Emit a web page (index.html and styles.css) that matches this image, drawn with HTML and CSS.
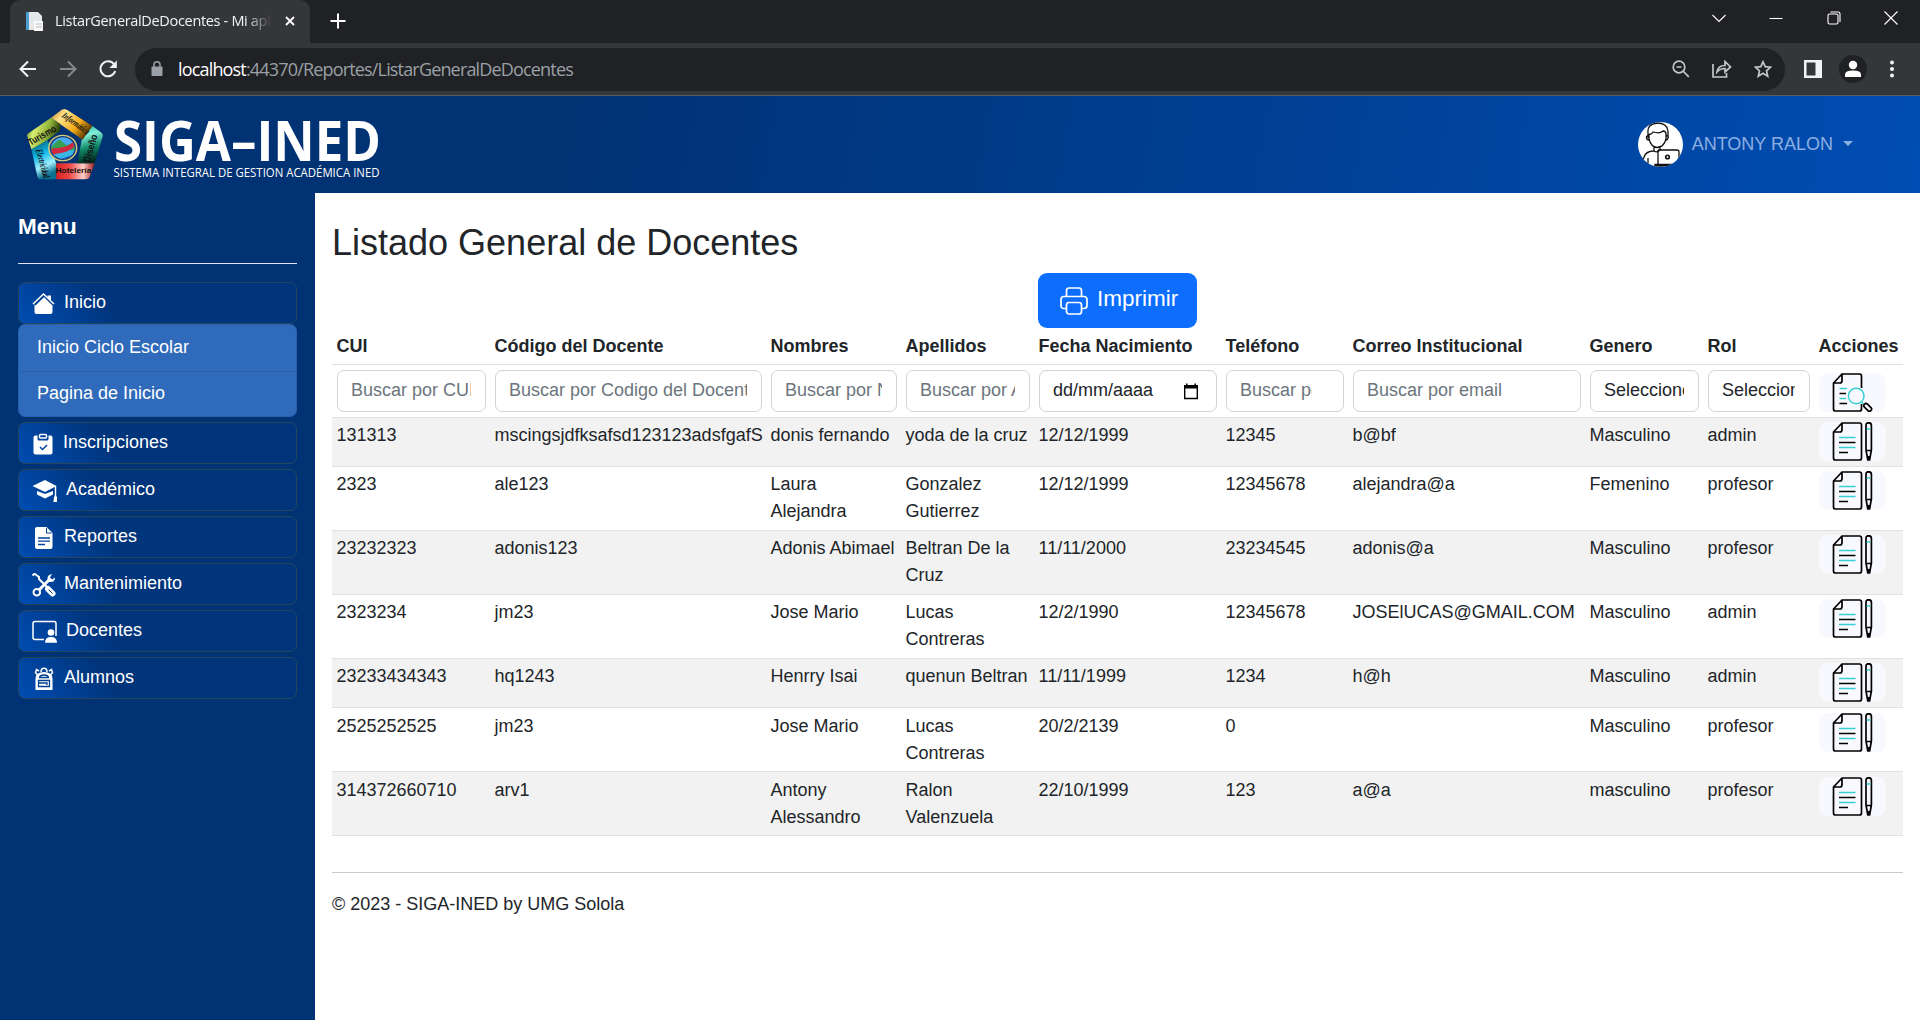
FILE: index.html
```html
<!DOCTYPE html>
<html lang="es">
<head>
<meta charset="utf-8">
<title>ListarGeneralDeDocentes - Mi aplicación</title>
<link rel="stylesheet" href="styles.css">
</head>
<body>
<svg class="defs" width="0" height="0">
  <symbol id="edit-doc" viewBox="0 0 67 39">
    <path d="M23 1H40.500Q42.500 1 42.500 3V36Q42.500 38 40.500 38H16.500Q14.500 38 14.500 36V10zV7.500Q23 10 21 10H14.500" fill="none" stroke="#000" stroke-width="1.700" stroke-linejoin="round"/>
    <path d="M20 15.500H36.500M20 25.500H36.500" stroke="#35cfcd" stroke-width="1.400"/>
    <path d="M20 20.500H36.500M20 30.500H29" stroke="#000" stroke-width="1.400"/>
    <path d="M47 28V3.500Q47 .8 49.700 .8T52.400 3.500V28L50.600 38H48.800zM47 28.500H52.400M49.700 34V38" fill="none" stroke="#000" stroke-width="1.700" stroke-linejoin="round"/>
    <path d="M47.700 7H51.700" stroke="#35cfcd" stroke-width="1.500"/>
  </symbol>
</svg>

<div class="tabstrip">
  <div class="tab">
    <svg class="favicon" width="18" height="21" viewBox="0 0 18 21"><path d="M1 1H12V19H1z" fill="#f4f6f8"/><path d="M1 1H5V19H1z" fill="#4a9fd0"/><path d="M4 1H13L17 5V19H4z" fill="#e4e8ea"/><path d="M9 10H18V20H9z" fill="#fafafa"/><path d="M11 13H17M11 16H17" stroke="#bbb"/></svg>
    <span class="tab-title">ListarGeneralDeDocentes - Mi aplicación</span>
    <svg class="tab-close" width="10" height="10" viewBox="0 0 10 10"><path d="M1 1L9 9M9 1L1 9" stroke="#fff" stroke-width="1.800"/></svg>
  </div>
  <svg class="new-tab" width="16" height="16" viewBox="0 0 16 16"><path d="M8 0.500V15.500M.5 8H15.500" stroke="#fff" stroke-width="2"/></svg>
  <div class="window-controls">
    <svg width="14" height="14" viewBox="0 0 14 14"><path d="M.5 4L7 10.500L13.500 4" /></svg>
    <svg width="14" height="14" viewBox="0 0 14 14"><path d="M.5 7.500H13.500"/></svg>
    <svg width="14" height="14" viewBox="0 0 14 14"><rect x="1" y="3" width="10" height="10" rx="1.500"/><path d="M3.500 1H11Q13 1 13 3V11"/></svg>
    <svg width="14" height="14" viewBox="0 0 14 14"><path d="M.5 .5L13.500 13.500M13.500 .5L.5 13.500"/></svg>
  </div>
</div>

<div class="toolbar">
  <div class="nav-buttons">
    <svg width="18" height="18" viewBox="0 0 18 18"><path d="M17 9H2M9 1.500L1.500 9L9 16.500" fill="none" stroke="#f1f3f4" stroke-width="2"/></svg>
    <svg width="18" height="18" viewBox="0 0 18 18"><path d="M1 9H16M9 1.500L16.500 9L9 16.500" fill="none" stroke="#85878a" stroke-width="2"/></svg>
    <svg width="18" height="18" viewBox="0 0 18 18"><path d="M15.200 4.500A7.500 7.500 0 1 0 16.200 11" fill="none" stroke="#f1f3f4" stroke-width="2"/><path d="M17.800 .5V8H10.300z" fill="#f1f3f4"/></svg>
  </div>
  <div class="omnibox">
    <svg class="lock" width="12" height="16" viewBox="0 0 12 16"><rect x=".5" y="5.500" width="11" height="9.500" rx="1" fill="#9aa0a6"/><path d="M3 6V3.800A3 3 0 0 1 9 3.800V6" fill="none" stroke="#9aa0a6" stroke-width="1.500"/></svg>
    <span class="url"><b>localhost</b>:44370/Reportes/ListarGeneralDeDocentes</span>
    <div class="omnibox-icons">
      <svg width="18" height="18" viewBox="0 0 18 18"><circle cx="7" cy="7" r="5.800"/><path d="M11 11L16.800 16.800M4.500 7H9.500"/></svg>
      <svg width="20" height="18" viewBox="0 0 20 18"><path d="M1 4V17H14.500V13M5 12Q6 5.500 13 5.500V1.500L18.500 7L13 12V8.500Q8 8.500 5 12z"/></svg>
      <svg width="18" height="18" viewBox="0 0 18 18"><path d="M9 1.800L11.200 6.700L16.600 7.200L12.500 10.800L13.700 16.200L9 13.300L4.300 16.200L5.500 10.800L1.400 7.200L6.800 6.700z"/></svg>
    </div>
  </div>
  <svg class="panel" width="18" height="18" viewBox="0 0 18 18"><path d="M0 0H18V18H0zM2.500 2.500V15.500H11.500V2.500z" fill="#f1f3f4" fill-rule="evenodd"/></svg>
  <svg class="profile" width="28" height="28" viewBox="0 0 28 28"><circle cx="14" cy="14" r="14" fill="#202124"/><circle cx="14" cy="10" r="4.200" fill="#fff"/><path d="M6 22V19.500Q6 15.500 14 15.500T22 19.500V22z" fill="#fff"/></svg>
  <svg class="kebab" width="4" height="18" viewBox="0 0 4 18"><g fill="#f1f3f4"><circle cx="2" cy="2.500" r="2"/><circle cx="2" cy="9" r="2"/><circle cx="2" cy="15.500" r="2"/></g></svg>
</div>

<header class="site-header">
  <svg class="brand" width="380" height="90" viewBox="0 0 380 90">
    <defs>
      <linearGradient id="lime" x1="0" y1="0" x2="1" y2=".3"><stop offset="0" stop-color="#3f6b10"/><stop offset=".3" stop-color="#d8ee70"/><stop offset=".7" stop-color="#8cb038"/><stop offset="1" stop-color="#2b3d08"/></linearGradient>
      <linearGradient id="gold" x1="0" y1="0" x2="1" y2=".6"><stop offset="0" stop-color="#c08010"/><stop offset=".3" stop-color="#ffe490"/><stop offset=".7" stop-color="#f4ac18"/><stop offset="1" stop-color="#5b3600"/></linearGradient>
      <linearGradient id="teal" x1="0" y1="0" x2=".2" y2="1"><stop offset="0" stop-color="#20b090"/><stop offset=".3" stop-color="#80f0d8"/><stop offset=".65" stop-color="#108868"/><stop offset="1" stop-color="#032c20"/></linearGradient>
      <linearGradient id="rose"><stop offset="0" stop-color="#d82020"/><stop offset=".35" stop-color="#f04848"/><stop offset=".7" stop-color="#ffd0c8"/><stop offset="1" stop-color="#a01818"/></linearGradient>
      <linearGradient id="aqua" x1="0" y1="0" x2=".3" y2="1"><stop offset="0" stop-color="#064050"/><stop offset=".45" stop-color="#10b8e8"/><stop offset=".75" stop-color="#a0f0ff"/><stop offset="1" stop-color="#0c7090"/></linearGradient>
      <clipPath id="seal"><circle cx="140" cy="144" r="32"/></clipPath>
    </defs>
    <g transform="translate(-3.350 0) scale(.3654 .33333)">
      <path d="M54 148L98 118L122 190V238H78Q72 238 70 228z" fill="url(#aqua)"/>
      <path d="M122 190H227L213 232Q210 238 203 238H122z" fill="url(#rose)"/>
      <path d="M221 78L246 98Q251 103 249 110L227 190H180L192 118z" fill="url(#teal)"/>
      <path d="M108 53L137 29Q144 25 151 29L221 78L194 119Z" fill="url(#gold)"/>
      <path d="M108 53L44 101Q41 104 43 110L54 148L98 120L133 92V72z" fill="url(#lime)"/>
      <circle cx="140" cy="144" r="38" fill="#163b78" stroke="#d8c878" stroke-width="4"/>
      <g clip-path="url(#seal)"><path d="M105 110H175V180H105z" fill="#48a8f0"/><path d="M105 144L130 118L150 136L175 126V150H105z" fill="#36a050"/><path d="M105 150H175V180H105z" fill="#1858c8"/><path d="M105 168L140 150H175V162L120 182z" fill="#38b8e0"/><path d="M107 146Q125 144 140 142T170 124L173 138Q155 156 138 158T111 166z" fill="#d02840"/></g>
      <g class="logo-words" fill="#111">
        <text x="52" y="137" font-size="29" textLength="86" transform="rotate(-32 52 137)" lengthAdjust="spacingAndGlyphs">Turismo</text>
        <text class="script" x="136" y="50" font-size="27" textLength="88" transform="rotate(38 136 50)" lengthAdjust="spacingAndGlyphs">Informática</text>
        <text x="214" y="188" font-size="28" textLength="84" transform="rotate(-75 214 188)" lengthAdjust="spacingAndGlyphs">Diseño</text>
        <text x="120" y="220" font-size="23" textLength="98" lengthAdjust="spacingAndGlyphs">Hotelería</text>
        <text class="script" x="66" y="150" font-size="27" textLength="88" transform="rotate(76 66 150)" lengthAdjust="spacingAndGlyphs">Electricidad</text>
      </g>
    </g>
    <text class="brand-name" x="99" y="60.500" textLength="267" lengthAdjust="spacingAndGlyphs">SIGA–INED</text>
    <text class="brand-sub" x="98.500" y="77" textLength="266" lengthAdjust="spacingAndGlyphs">SISTEMA INTEGRAL DE GESTION ACADÉMICA INED</text>
  </svg>
  <div class="user">
    <svg width="45" height="45" viewBox="0 0 45 45">
      <clipPath id="av"><circle cx="22.500" cy="22.500" r="22.500"/></clipPath>
      <circle cx="22.500" cy="22.500" r="22.500" fill="#fff"/>
      <g clip-path="url(#av)" fill="none" stroke="#111" stroke-width="1.300">
        <path d="M10 16V11Q9 2 19 1Q29 1 30 9V16M11 12Q13 13 15 10Q22 12 25 9Q28 9 28 12M11 12V17Q13 25 19 25.500Q26 25 28 17V12M11 13.500Q8 13.500 8.500 16T12 18M28 13.500Q31 13.500 30 16T28 18M16 25V29Q8 29 6 35Q5 38 4 45M16 29Q19 31 22 28V25M10 36V45"/>
        <path d="M20 28H39Q41 28 41 30V42M20 28V42" /><path d="M17 42.500H42V44H17z" fill="#777"/><circle cx="29.500" cy="35" r="1.800" stroke-width="1.600"/>
      </g>
    </svg>
    <span class="user-name">ANTONY RALON</span><i class="caret"></i>
  </div>
</header>

<div class="layout">
  <aside class="sidebar">
    <h5>Menu</h5>
    <hr>
    <nav>
      <div class="group">
        <a class="item"><svg width="24" height="24" viewBox="0 0 24 24"><path d="M2.500 12.500L12 3.500L20.500 12V20Q20.500 22 18.500 22H4.500Q2.500 22 2.500 20z" fill="#fff"/><path d="M2.200 12.200L12 2.800L21.800 12.200" fill="none" stroke="#00408f" stroke-width="3.600"/><path d="M1 12L11.500 2L22 12" fill="none" stroke="#fff" stroke-width="1.500"/><path d="M15.500 3.500H19V8.500L15.500 5.500z" fill="#fff"/></svg><span>Inicio</span></a>
        <div class="submenu"><a>Inicio Ciclo Escolar</a><a>Pagina de Inicio</a></div>
      </div>
      <a class="item n2"><svg width="24" height="24" viewBox="0 0 24 24"><path d="M3.500 3.500H18.500Q20.500 3.500 20.500 5.500V20.500Q20.500 22.500 18.500 22.500H3.500Q1.500 22.500 1.500 20.500V5.500Q1.500 3.500 3.500 3.500z" fill="#fff"/><path d="M5.500 1H16.500V7Q16.500 8.500 15 8.500H7Q5.500 8.500 5.500 7z" fill="#00419a"/><rect x="7.500" y="2.500" width="7" height="3.500" rx="1" fill="none" stroke="#fff" stroke-width="1.500"/><path d="M8 15L10.500 17.500L15 13" fill="none" stroke="#00419a" stroke-width="1.500"/></svg><span>Inscripciones</span></a>
      <a class="item n3"><svg width="26" height="24" viewBox="0 0 26 24"><path d="M.5 7L13 1L24.500 7L13 13z" fill="#fff"/><path d="M5 12L13 15L21 12V15.500L13 19.500L5 15.500z" fill="#fff"/><path d="M23.500 7V18" stroke="#fff" stroke-width="1.400"/><path d="M22 17.500H25V23H21.500z" fill="#fff"/></svg><span>Académico</span></a>
      <a class="item"><svg width="24" height="24" viewBox="0 0 24 24"><path d="M5 1H14.500L20.500 7V21Q20.500 23 18.500 23H5Q3 23 3 21V3Q3 1 5 1z" fill="#fff"/><path d="M14.500 2V7H19.500" fill="none" stroke="#00408f"/><path d="M6 12H18M6 15.200H18M6 18.500H13" stroke="#00419a" stroke-width="1.300"/></svg><span>Reportes</span></a>
      <a class="item"><svg width="24" height="24" viewBox="0 0 24 24"><path d="M.5 2.500L2.500 .8L7 4V6L18 17" fill="none" stroke="#fff" stroke-width="2"/><path d="M16 16L20.500 20.500" stroke="#fff" stroke-width="6" stroke-linecap="round"/><path d="M16.500 16.500L20.500 20.500" stroke="#00408f" stroke-width="1"/><path d="M18 6L6 18" stroke="#fff" stroke-width="3"/><circle cx="4.800" cy="19.300" r="3.300" fill="#004198" stroke="#fff" stroke-width="2"/><path d="M20 1Q15 2 15.500 6Q15.500 9 19 9Q22.500 9 23.200 4.500L20 6.500L18 4.500z" fill="#fff"/></svg><span>Mantenimiento</span></a>
      <a class="item n3"><svg width="26" height="24" viewBox="0 0 26 24"><path d="M12 19.500H3Q1 19.500 1 17.500V3.500Q1 1.500 3 1.500H22Q24 1.500 24 3.500V16" fill="none" stroke="#fff" stroke-width="1.500"/><circle cx="19" cy="12.500" r="3.300" fill="#fff"/><path d="M13 22.800Q13 17 19 17T25 22.800z" fill="#fff"/></svg><span>Docentes</span></a>
      <a class="item"><svg width="24" height="24" viewBox="0 0 24 24"><path d="M3.500 22.500V12Q3.500 5 12 5T20.500 12V22.500Q20.500 23 20 23H4Q3.500 23 3.500 22.500z" fill="#fff"/><path d="M9 5Q9 1.300 12 1.300T15 5" fill="none" stroke="#fff" stroke-width="1.500"/><path d="M5.500 8L3.500 5.500L4.500 2.500L7 4M18.500 8L20.500 5.500L19.500 2.500L17 4" fill="none" stroke="#fff" stroke-width="1.500"/><path d="M7.500 10.500Q8 8 12 8T16.500 10.500zM6.500 13.500H17.500V19.500H6.500zM6.500 16H15V18" fill="none" stroke="#00408f" stroke-width="1.300"/></svg><span>Alumnos</span></a>
    </nav>
  </aside>

  <main>
    <h2>Listado General de Docentes</h2>
    <button class="print"><svg width="28" height="28" viewBox="0 0 28 28" fill="none" stroke="#fff" stroke-width="1.700"><path d="M6.500 9.500V3.500Q6.500 1 9 1H19Q21.500 1 21.500 3.500V9.500M6.500 21.500H4Q1 21.500 1 18.500V12.500Q1 9.500 4 9.500H24Q27 9.500 27 12.500V18.500Q27 21.500 24 21.500H21.500"/><rect x="6.500" y="15.500" width="15" height="11.500" rx="2.500"/></svg><span>Imprimir</span></button>
    <table>
      <colgroup><col class="c1"><col class="c2"><col class="c3"><col class="c4"><col class="c5"><col class="c6"><col class="c7"><col class="c8"><col class="c9"><col class="c10"></colgroup>
      <thead>
        <tr><th>CUI</th><th>Código del Docente</th><th>Nombres</th><th>Apellidos</th><th>Fecha Nacimiento</th><th>Teléfono</th><th>Correo Institucional</th><th>Genero</th><th>Rol</th><th>Acciones</th></tr>
      </thead>
      <tbody>
        <tr class="filters">
          <td><input placeholder="Buscar por CUI"></td><td><input placeholder="Buscar por Codigo del Docente"></td><td><input placeholder="Buscar por Nombre"></td><td><input placeholder="Buscar por Apellido"></td>
          <td><div class="field date"><span>dd/mm/aaaa</span><svg width="16" height="17" viewBox="0 0 16 17"><path d="M1.700 3V15.500H14.300V3" fill="none" stroke="#000" stroke-width="1.400"/><path d="M1 2H3V.5H4.500V2H11.500V.5H13V2H15V5.500H1z" fill="#000"/></svg></div></td>
          <td><input class="num" placeholder="Buscar por telefono"></td><td><input placeholder="Buscar por email"></td>
          <td><div class="field"><span class="clip">Seleccione</span></div></td><td><div class="field"><span class="clip">Seleccione</span></div></td>
          <td class="act"><svg class="act-icon find" width="67" height="39" viewBox="0 0 67 39"><path d="M42.500 15V3Q42.500 1 40.500 1H23L14.500 10V36Q14.500 38 16.500 38H40.500Q42.500 38 42.500 36V31M23 1V7.500Q23 10 21 10H14.500" fill="none" stroke="#000" stroke-width="1.700"/><path d="M20.500 15.500H28M20.500 25.500H27" stroke="#35cfcd" stroke-width="1.400"/><path d="M20.500 20.500H27M20.500 30.500H28" stroke="#000" stroke-width="1.400"/><circle cx="37.200" cy="23" r="7.800" fill="#f8f8ff" stroke="#35cfcd" stroke-width="1.400"/><path d="M42.500 29L45 31.500" stroke="#35cfcd" stroke-width="1.500"/><rect x="44.200" y="32.300" width="9" height="4.200" rx="2" transform="rotate(45 48.700 34.400)" fill="none" stroke="#000" stroke-width="1.700"/></svg></td>
        </tr>
        <tr class="odd short"><td>131313</td><td>mscingsjdfksafsd123123adsfgafS</td><td>donis fernando</td><td>yoda de la cruz</td><td>12/12/1999</td><td>12345</td><td>b@bf</td><td>Masculino</td><td>admin</td><td class="act"><svg class="act-icon"><use href="#edit-doc"/></svg></td></tr>
        <tr><td>2323</td><td>ale123</td><td>Laura Alejandra</td><td>Gonzalez Gutierrez</td><td>12/12/1999</td><td>12345678</td><td>alejandra@a</td><td>Femenino</td><td>profesor</td><td class="act"><svg class="act-icon"><use href="#edit-doc"/></svg></td></tr>
        <tr class="odd"><td>23232323</td><td>adonis123</td><td>Adonis Abimael</td><td>Beltran De la Cruz</td><td>11/11/2000</td><td>23234545</td><td>adonis@a</td><td>Masculino</td><td>profesor</td><td class="act"><svg class="act-icon"><use href="#edit-doc"/></svg></td></tr>
        <tr><td>2323234</td><td>jm23</td><td>Jose Mario</td><td>Lucas Contreras</td><td>12/2/1990</td><td>12345678</td><td>JOSElUCAS@GMAIL.COM</td><td>Masculino</td><td>admin</td><td class="act"><svg class="act-icon"><use href="#edit-doc"/></svg></td></tr>
        <tr class="odd short"><td>23233434343</td><td>hq1243</td><td>Henrry Isai</td><td>quenun Beltran</td><td>11/11/1999</td><td>1234</td><td>h@h</td><td>Masculino</td><td>admin</td><td class="act"><svg class="act-icon"><use href="#edit-doc"/></svg></td></tr>
        <tr class="low"><td>2525252525</td><td>jm23</td><td>Jose Mario</td><td>Lucas Contreras</td><td>20/2/2139</td><td>0</td><td></td><td>Masculino</td><td>profesor</td><td class="act"><svg class="act-icon"><use href="#edit-doc"/></svg></td></tr>
        <tr class="odd low"><td>314372660710</td><td>arv1</td><td>Antony Alessandro</td><td>Ralon Valenzuela</td><td>22/10/1999</td><td>123</td><td>a@a</td><td>masculino</td><td>profesor</td><td class="act"><svg class="act-icon"><use href="#edit-doc"/></svg></td></tr>
      </tbody>
    </table>
    <footer>© 2023 - SIGA-INED by UMG Solola</footer>
  </main>
</div>
</body>
</html>
```
FILE: styles.css
```css
* { box-sizing: border-box; }
body {
  margin: 0;
  height: 1020px;
  overflow: hidden;
  display: flex;
  flex-direction: column;
  font: 18px/27px "Liberation Sans", Arial, sans-serif;
  color: #212529;
  background: #fff;
}
svg { display: block; flex: none; }
.defs { display: none; }

/* Browser frame */
.tabstrip {
  flex: none;
  height: 43px;
  background: #202124;
  display: flex;
  align-items: flex-start;
  padding-left: 10px;
  font-family: "Open Sans", "Noto Sans", sans-serif;
}
.tab {
  width: 300px;
  height: 43px;
  background: #35363a;
  border-radius: 10px 10px 0 0;
  display: flex;
  align-items: center;
  padding: 0 15px 1px 15px;
}
.tab-title {
  width: 215px;
  margin: -2px 0 0 12px;
  overflow: hidden;
  white-space: nowrap;
  font-size: 14.5px;
  letter-spacing: -.33px;
  color: #f1f3f4;
  -webkit-mask-image: linear-gradient(90deg, #000 190px, transparent 217px);
  mask-image: linear-gradient(90deg, #000 190px, transparent 217px);
}
.tab-close { margin-left: 15px; }
.new-tab { margin: 13px 0 0 20px; }
.window-controls {
  margin: 11px 22px 0 auto;
  display: flex;
  gap: 43.5px;
}
.window-controls svg { fill: none; stroke: #fff; stroke-width: 1.1; }
.toolbar {
  flex: none;
  height: 53px;
  background: #35363a;
  border-bottom: 1px solid #5b5c5f;
  display: flex;
  align-items: center;
  padding-left: 19px;
}
.nav-buttons { width: 116px; display: flex; gap: 22px; }
.omnibox {
  width: 1650px;
  height: 43px;
  border-radius: 22px;
  background: #202124;
  display: flex;
  align-items: center;
  padding: 0 13px 0 16px;
}
.url {
  margin-left: 15px;
  font: 18px "Open Sans", "Noto Sans", sans-serif;
  letter-spacing: -.83px;
  color: #9aa0a6;
}
.url b { font-weight: 400; color: #fff; }
.omnibox-icons { margin-left: auto; display: flex; gap: 22px; }
.omnibox-icons svg { fill: none; stroke: #c4c7c9; stroke-width: 1.7; }
.panel { margin-left: 19px; }
.profile { margin-left: 17px; }
.kebab { margin-left: 23px; }

/* Site header */
.site-header {
  flex: none;
  height: 97px;
  background: linear-gradient(100deg, #003274 30%, #004db3 100%);
  display: flex;
  align-items: center;
  justify-content: space-between;
  padding: 0 67px 0 15px;
}
.logo-words { font-family: "Liberation Sans", sans-serif; font-weight: 700; }
.logo-words .script { font-family: "Liberation Serif", serif; font-style: italic; }
.brand-name { font: 700 55px "Open Sans", "Noto Sans", sans-serif; fill: #fff; }
.brand-sub { font: 500 13px "Open Sans", "Noto Sans", sans-serif; fill: #fff; }
.user { display: flex; align-items: center; color: #8cafe0; }
.user-name { margin-left: 9px; }
.caret {
  margin: -2px 0 0 10px;
  border: 5px solid transparent;
  border-top-color: currentColor;
  border-bottom: 0;
}

/* Sidebar */
.layout { flex: 1; display: flex; min-height: 0; }
.sidebar {
  width: 315px;
  background: #003274;
  padding: 20px 18px 0;
  color: #fff;
}
.sidebar h5 { margin: 0; font-size: 22.5px; line-height: 27px; }
.sidebar hr { margin: 23px 0 18px; border: 0; border-top: 1px solid #dfe5ee; }
.sidebar nav { display: flex; flex-direction: column; gap: 5px; }
.item {
  height: 42px;
  border: 1px solid #24475f;
  border-radius: 7px;
  background: linear-gradient(50deg, #004db3 0, #00357c 33%, #00357c 100%);
  display: flex;
  align-items: center;
  padding: 1px 0 0 13px;
}
.item span { margin: -2px 0 0 8px; }
.item.n2 span { margin-left: 7px; }
.item.n3 span { margin-left: 8px; }
.submenu {
  height: 93px;
  border: 1px solid #2860ab;
  border-radius: 7px;
  background: #306bbb;
}
.submenu a { display: block; height: 46px; padding: 9px 18px; }
.submenu a + a { border-top: 1px solid #2860ab; padding-top: 8px; }

/* Content */
main { flex: 1; padding: 28px 17px 0; }
h2 { margin: 0; font-size: 36px; font-weight: 400; line-height: 43px; }
.print {
  width: 159px;
  height: 55px;
  margin: 9px 0 0 706px;
  border: 0;
  border-radius: 9px;
  background: #0d6efd;
  color: #fff;
  font: 22.5px "Liberation Sans", Arial, sans-serif;
  display: flex;
  align-items: center;
  padding: 0 0 0 22px;
}
.print span { margin: -3px 0 0 9px; }
table { width: 1571px; table-layout: fixed; border-collapse: separate; border-spacing: 0; }
.c1 { width: 158px; } .c2 { width: 276px; } .c3 { width: 135px; } .c4 { width: 133px; } .c5 { width: 187px; }
.c6 { width: 127px; } .c7 { width: 237px; } .c8 { width: 118px; } .c9 { width: 111px; } .c10 { width: 89px; }
tr { height: 64px; }
thead tr { height: 37px; }
.filters { height: 53px; }
.short { height: 49px; }
.odd { background: #f2f2f2; }
th, td { padding: 4px 4.5px 0; vertical-align: top; text-align: left; border-bottom: 1px solid #dee2e6; }
th { white-space: nowrap; padding-top: 5px; }
.low td { padding-top: 5px; }
.filters td { padding-top: 5px; }
.filters td.act { padding-top: 8px; }
.act-icon { width: 67px; height: 39px; border-radius: 9px; background: #f8f8ff; }
input, .field {
  display: block;
  width: 100%;
  height: 42px;
  border: 1px solid #ced4da;
  border-radius: 7px;
  padding: 0 13.5px 1px;
  background: #fff;
  font: 18px "Liberation Sans", Arial, sans-serif;
  color: #212529;
}
input::placeholder { color: #6c757d; opacity: 1; }
.num { padding-right: 31px; }
.field { display: flex; align-items: center; justify-content: space-between; padding-bottom: 2px; }
.date svg { margin: 3px 3px 0 0; }
.clip { overflow: hidden; white-space: nowrap; }
footer { margin-top: 36px; border-top: 1px solid #c8c9ca; padding-top: 18px; }
```
